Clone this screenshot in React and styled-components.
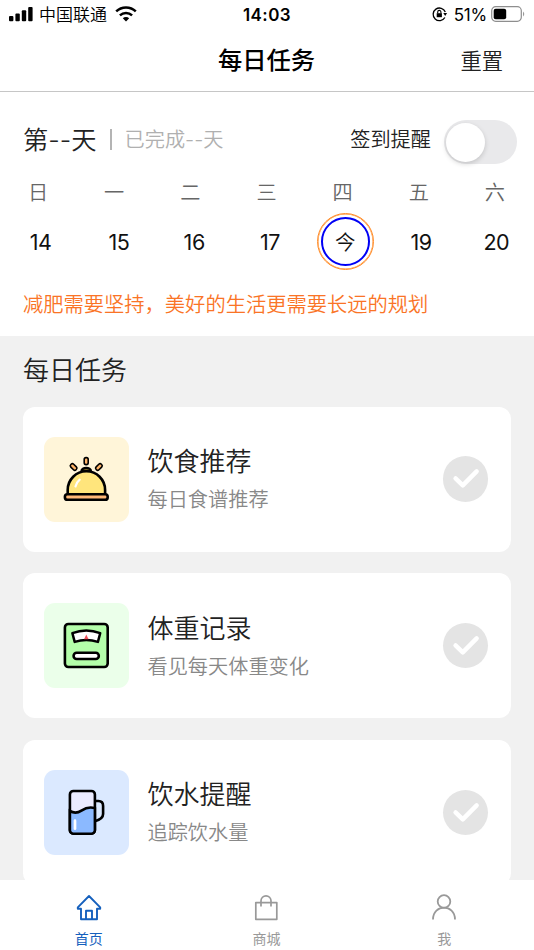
import styled, { createGlobalStyle } from 'styled-components';

const weekdays = ['日', '一', '二', '三', '四', '五', '六'];

const dates = [
  { label: '14', shift: 5 },
  { label: '15', shift: 9 },
  { label: '16', shift: 7 },
  { label: '17', shift: 6 },
  { label: '今', shift: 4, today: true },
  { label: '19', shift: 3 },
  { label: '20', shift: 1 }
];

const ClocheIcon = () => (
  <svg width="85" height="85" viewBox="0 0 85 85" fill="none" stroke="#000" strokeLinecap="round">
    <path d="M37.500 34.500c0-4.600 9.400-4.600 9.400 0z" fill="#a8913a" strokeWidth="2.500" />
    <path d="M23.700 57.500V53a18.700 18.700 0 0 1 37.400 0v4.500z" fill="#ffe57c" strokeWidth="2.600" />
    <path d="M31.500 49.500c.7-3 2-5 4.200-6.800" stroke="#fff" strokeWidth="2.200" />
    <rect x="20.900" y="57.200" width="42.800" height="5.600" rx="2.600" fill="#ffb877" strokeWidth="2.600" />
    <g fill="#ffb469" strokeWidth="1.600">
      <rect x="40.200" y="20.600" width="4" height="7" rx="1.800" />
      <rect x="27.600" y="26.300" width="4" height="7.400" rx="1.800" transform="rotate(-45 29.600 30)" />
      <rect x="52.900" y="26.300" width="4" height="7.400" rx="1.800" transform="rotate(45 54.900 30)" />
    </g>
  </svg>
);

const ScaleIcon = () => (
  <svg width="85" height="85" viewBox="0 0 85 85" fill="none" stroke="#000" strokeLinejoin="round">
    <rect x="20.900" y="21" width="42.800" height="43" rx="3.500" fill="#b4ffaa" strokeWidth="2.600" />
    <path d="M28.400 30.200q13.900-5.400 27.800 0l-2.300 8.700q-11.600-3.600-23.200 0z" fill="#fff" strokeWidth="2.500" />
    <path d="M42.300 31.500l2.200 4.700h-4.400z" fill="#f0505b" stroke="none" />
    <rect x="29.600" y="49.700" width="25.200" height="6.300" rx="3" fill="#fff" strokeWidth="2.600" />
  </svg>
);

const CupIcon = () => (
  <svg width="85" height="85" viewBox="0 0 85 85" fill="none" stroke="#000" strokeWidth="2.600">
    <rect x="25.900" y="21" width="25" height="42.700" rx="3.500" fill="#ebebff" />
    <path
      d="M25.900 41c4 2.300 7 2.600 11.500-.4 4.500-3 8.500-4.100 13.500-2.400v22a3.500 3.500 0 0 1-3.500 3.500h-18a3.500 3.500 0 0 1-3.500-3.500z"
      fill="#8bb9ff"
    />
    <path d="M50.900 31h3.500q4.700 0 4.700 5v8q0 5-8.200 7.200" />
    <path d="M31 50.700v8" stroke="#fff" strokeLinecap="round" strokeWidth="2.700" />
  </svg>
);

const tasks = [
  { title: '饮食推荐', text: '每日食谱推荐', color: '#fff5d9', Icon: ClocheIcon },
  { title: '体重记录', text: '看见每天体重变化', color: '#ebffea', Icon: ScaleIcon },
  { title: '饮水提醒', text: '追踪饮水量', color: '#dbe9ff', Icon: CupIcon }
];

const HomeIcon = () => (
  <svg width="26" height="28" viewBox="0 0 26 28" fill="none" stroke="currentColor" strokeWidth="1.900" strokeLinejoin="round">
    <path d="M13 2L1.800 13.300V14.700H5V25.300H21V14.700h3.200V13.300z" />
    <path d="M10 25V16.700h6V25" />
  </svg>
);

const BagIcon = () => (
  <svg width="26" height="28" viewBox="0 0 26 28" fill="none" stroke="currentColor" strokeWidth="1.700" strokeLinejoin="round">
    <path d="M2.800 8.600h21v16.700h-21z" />
    <path d="M8 12.500V6.800a5 5 0 0 1 10 0v5.700" />
  </svg>
);

const UserIcon = () => (
  <svg width="26" height="28" viewBox="0 0 26 28" fill="none" stroke="currentColor" strokeWidth="1.800">
    <circle cx="13" cy="7.500" r="6.300" />
    <path d="M2 25.500C2 9.700 24 9.700 24 25.500" />
  </svg>
);

const StatusBar = () => (
  <Status>
    <Carrier>
      <svg width="24" height="16" viewBox="0 0 24 16">
        <rect x="0" y="10" width="4.400" height="5.300" rx="1" />
        <rect x="6.400" y="7.500" width="4.400" height="7.800" rx="1" />
        <rect x="12.800" y="4.300" width="4.400" height="11" rx="1" />
        <rect x="19.200" y="1" width="4.400" height="14.300" rx="1" />
      </svg>
      <span>中国联通</span>
      <svg width="22" height="16" viewBox="0 0 22 16" fill="none" stroke="#000" strokeWidth="2.500">
        <path d="M1.200 5.300a14.200 14.200 0 0 1 19.600 0" />
        <path d="M4.900 9.300a9 9 0 0 1 12.200 0" />
        <path d="M11 15.500l-3.200-3.200a4.600 4.600 0 0 1 6.400 0z" fill="#000" stroke="none" />
      </svg>
    </Carrier>
    <Clock>14:03</Clock>
    <Power>
      <svg width="16" height="16" viewBox="0 0 16 16" fill="none" stroke="#000" strokeWidth="1.300">
        <path d="M12.900 11.500A6.300 6.300 0 1 1 13.300 6" />
        <path d="M11.300 7h3.800l-1.900 2.900z" fill="#000" stroke="none" />
        <rect x="4.700" y="7.200" width="5.200" height="4" fill="#000" stroke="none" />
        <path d="M5.700 7.300V6a1.600 1.600 0 0 1 3.200 0v1.300" strokeWidth="1.100" />
      </svg>
      <span>51%</span>
      <svg width="34" height="16" viewBox="0 0 34 16">
        <rect x=".7" y=".7" width="29.600" height="14.600" rx="4" fill="none" stroke="#8e8e8e" strokeWidth="1.200" />
        <rect x="2.700" y="2.800" width="12.500" height="10.400" rx="2" />
        <path d="M32 5.500q2.500 2.500 0 5z" fill="#999" />
      </svg>
    </Power>
  </Status>
);

const TaskCard = ({ title, text, color, Icon }) => (
  <Card>
    <Tile $color={color}>
      <Icon />
    </Tile>
    <TaskInfo>
      <h3>{title}</h3>
      <p>{text}</p>
    </TaskInfo>
    <Check>
      <svg width="45.500" height="45.500" viewBox="0 0 46 46" fill="none" stroke="#fff" strokeWidth="4.500" strokeLinecap="round" strokeLinejoin="round">
        <path d="M12.700 22.700l7.300 7L34 15.500" />
      </svg>
    </Check>
  </Card>
);

const App = () => {
  return (
    <Page>
      <GlobalStyle />
      <StatusBar />
      <Header>
        <span />
        <h1>每日任务</h1>
        <button type="button">重置</button>
      </Header>
      <Calendar>
        <Summary>
          <DayCount>第--天</DayCount>
          <Divider />
          <Finished>已完成--天</Finished>
          <Remind>签到提醒</Remind>
          <Toggle type="button" role="switch" aria-checked="false">
            <span />
          </Toggle>
        </Summary>
        <Week>
          {weekdays.map((day) => (
            <span key={day}>{day}</span>
          ))}
        </Week>
        <Dates>
          {dates.map(({ label, shift, today }) => (
            <DateCell key={label} $shift={shift}>
              {today ? (
                <Today>
                  <span>{label}</span>
                </Today>
              ) : (
                label
              )}
            </DateCell>
          ))}
        </Dates>
        <Slogan>减肥需要坚持，美好的生活更需要长远的规划</Slogan>
      </Calendar>
      <Tasks>
        <h2>每日任务</h2>
        {tasks.map((task) => (
          <TaskCard key={task.title} {...task} />
        ))}
      </Tasks>
      <TabBar>
        <Tab $active>
          <HomeIcon />
          首页
        </Tab>
        <Tab>
          <BagIcon />
          商城
        </Tab>
        <Tab>
          <UserIcon />我
        </Tab>
      </TabBar>
    </Page>
  );
};

export default App;

const GlobalStyle = createGlobalStyle`
  * {
    box-sizing: border-box;
    margin: 0;
    padding: 0;
  }

  body {
    font-family: Inter, 'Noto Sans CJK SC', sans-serif;
    color: #222;
    background-color: #fff;
  }

  button {
    border: none;
    background: none;
    font-family: inherit;
  }

  svg {
    display: block;
    flex-shrink: 0;
  }
`;

const Page = styled.div`
  display: flex;
  flex-direction: column;
  height: 950px;
  overflow: hidden;
  white-space: nowrap;
`;

const Status = styled.div`
  display: grid;
  grid-template-columns: 1fr auto 1fr;
  align-items: center;
  flex-shrink: 0;
  height: 30px;
  padding: 0 9px 0 9px;
  color: #000;
  font-size: 17px;
  line-height: 24px;
`;

const Carrier = styled.div`
  display: flex;
  align-items: center;

  & > svg {
    margin-bottom: 2px;
  }

  & > span {
    margin: 0 8px 0 6px;
    font-weight: 350;
  }
`;

const Clock = styled.div`
  font-size: 17px;
  font-weight: 600;
  letter-spacing: 0.4px;
`;

const Power = styled.div`
  display: flex;
  align-items: center;
  justify-content: flex-end;

  & > svg {
    margin-bottom: 2px;
  }

  & > span {
    margin: 0 4px 0 6px;
    font-size: 17px;
    letter-spacing: -0.2px;
  }
`;

const Header = styled.header`
  display: grid;
  grid-template-columns: 1fr auto 1fr;
  align-items: center;
  flex-shrink: 0;
  height: 62px;
  padding-right: 31px;
  padding-left: 30px;
  border-bottom: 1px solid #c6c6c6;

  & > h1 {
    margin-bottom: 1px;
    color: #000;
    font-size: 24.300px;
    font-weight: 500;
    line-height: 36px;
  }

  & > button {
    justify-self: end;
    color: #222;
    font-size: 21.300px;
    font-weight: 350;
    line-height: 30px;
  }
`;

const Calendar = styled.section`
  flex-shrink: 0;
  height: 244px;
  padding-top: 28px;
`;

const Summary = styled.div`
  display: flex;
  align-items: center;
  height: 44px;
  padding: 0 17px 0 23px;
  margin-bottom: 14px;
  line-height: 36px;
`;

const DayCount = styled.span`
  padding-bottom: 4px;
  font-size: 25.300px;
  font-weight: 350;
`;

const Divider = styled.i`
  width: 2px;
  height: 21px;
  margin: 0 13px 6px;
  background-color: #b4b4b4;
`;

const Finished = styled.span`
  padding-bottom: 4px;
  color: #b0b0b0;
  font-size: 20.200px;
  font-weight: 350;
`;

const Remind = styled.span`
  margin: 0 13px 4px auto;
  font-size: 20.200px;
  font-weight: 350;
`;

const Toggle = styled.button`
  width: 73px;
  height: 44px;
  padding: 2px;
  border-radius: 22px;
  background-color: #e9e9eb;

  & > span {
    display: block;
    width: 39px;
    height: 39px;
    border-radius: 50%;
    background-color: #fff;
    box-shadow: 0 2px 5px rgba(0, 0, 0, 0.16);
  }
`;

const Week = styled.div`
  display: grid;
  grid-template-columns: repeat(7, 1fr);
  height: 30px;
  padding-right: 1px;
  color: #666;
  font-size: 20.200px;
  font-weight: 350;
  line-height: 30px;
  text-align: center;
`;

const Dates = styled.div`
  display: grid;
  grid-template-columns: repeat(7, 1fr);
  align-items: center;
  height: 67px;
  color: #111;
  font-size: 21.500px;
  letter-spacing: -0.4px;
`;

const DateCell = styled.div`
  display: flex;
  justify-content: center;
  padding-left: ${({ $shift }) => $shift}px;
`;

const Today = styled.div`
  display: grid;
  place-items: center;
  flex-shrink: 0;
  width: 57px;
  height: 57px;
  border: 1.500px solid #ff8c28;
  border-radius: 50%;
  box-shadow: inset 0 0 0 0.500px #ff8c28;

  & > span {
    width: 49px;
    height: 49px;
    border: 2px solid #0000f5;
    border-radius: 50%;
    font-size: 20.500px;
    font-weight: 350;
    letter-spacing: 0;
    line-height: 47px;
    text-align: center;
  }
`;

const Slogan = styled.p`
  padding: 15px 23px 0;
  color: #fa7426;
  font-size: 20.280px;
  font-weight: 350;
  line-height: 30px;
`;

const Tasks = styled.main`
  flex: 1;
  min-height: 0;
  overflow: hidden;
  padding: 16px 23px 0;
  background-color: #f1f1f1;

  & > h2 {
    margin-bottom: 16.500px;
    font-size: 26px;
    font-weight: 350;
    line-height: 38px;
  }
`;

const Card = styled.div`
  display: flex;
  align-items: center;
  height: 145.300px;
  padding: 0 23px 0 20.700px;
  margin-bottom: 21.300px;
  border-radius: 12px;
  background-color: #fff;
`;

const Tile = styled.div`
  flex-shrink: 0;
  width: 85.300px;
  height: 85.300px;
  border-radius: 11px;
  background-color: ${({ $color }) => $color};
`;

const TaskInfo = styled.div`
  flex: 1;
  padding-left: 18.500px;

  & > h3 {
    font-size: 26px;
    font-weight: 350;
    line-height: 40px;
  }

  & > p {
    margin-top: 2px;
    color: #888;
    font-size: 20.200px;
    font-weight: 350;
    line-height: 32px;
  }
`;

const Check = styled.div`
  width: 45.500px;
  height: 45.500px;
  border-radius: 50%;
  background-color: #e4e4e4;
`;

const TabBar = styled.nav`
  display: grid;
  grid-template-columns: repeat(3, 1fr);
  flex-shrink: 0;
  height: 70px;
  padding-right: 1px;
  background-color: #fff;
`;

const Tab = styled.div`
  display: flex;
  flex-direction: column;
  align-items: center;
  gap: 7px;
  padding-top: 14px;
  color: ${({ $active }) => ($active ? '#1560bd' : '#999')};
  font-size: 14px;
  line-height: 20px;
`;
